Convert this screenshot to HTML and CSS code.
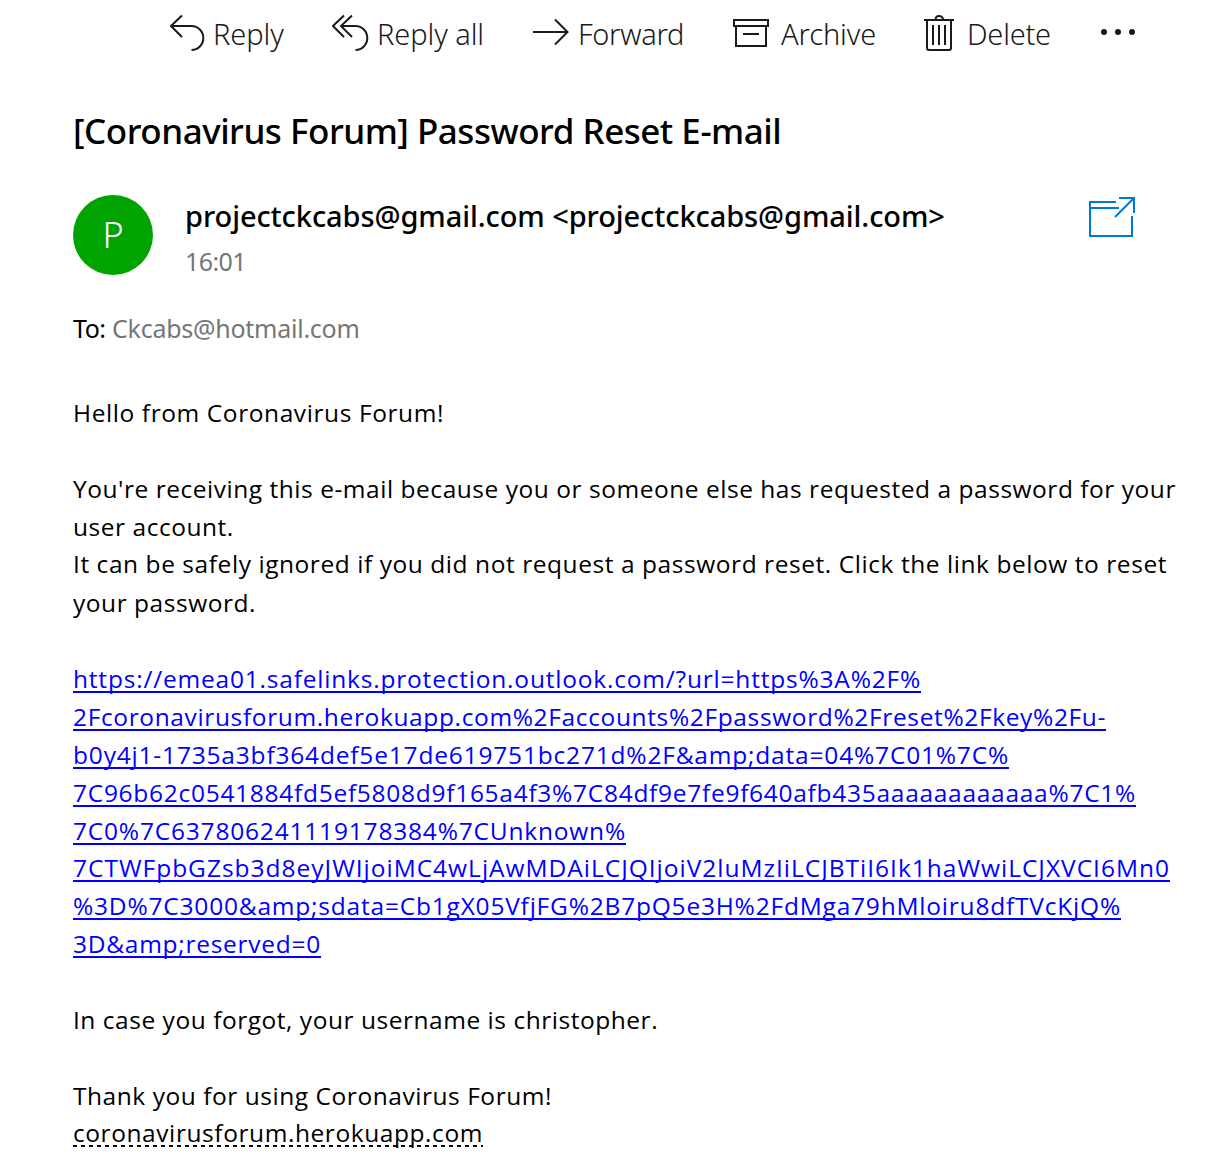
FILE: index.html
```html
<!DOCTYPE html>
<html lang="en">
<head>
<meta charset="utf-8">
<title>Password Reset E-mail</title>
<link rel="stylesheet" href="styles.css">
</head>
<body>
<nav class="toolbar">
  <a class="action reply"><svg width="43" height="54" viewBox="170 0 43 54"><path d="M182 15.500L171 26l11 11M171 26h20.500a11.800 12 0 0 1 0 24"/></svg><span>Reply</span></a>
  <a class="action reply-all"><svg width="45" height="54" viewBox="332 0 45 54"><path d="M344 15.500L333 26l11 11M352 15.500L341 26l11 11M341 26h14.500a11.800 12 0 0 1 0 24"/></svg><span>Reply all</span></a>
  <a class="action forward"><svg width="45" height="54" viewBox="533 0 45 54"><path d="M533 32h35M555 19.500L567.500 32L555 44.500"/></svg><span>Forward</span></a>
  <a class="action archive"><svg width="48" height="54" viewBox="733 0 48 54"><path d="M734 20h34v6h-34zM736 26v20h30V26M743 34h16"/></svg><span>Archive</span></a>
  <a class="action delete"><svg width="43" height="54" viewBox="924 0 43 54"><path d="M924 20h30M927 20v28q0 2 2 2h20q2 0 2-2V20M935.500 20q0-4 3.500-4t4.500 4M933 25v20M939 25v20M945 25v20"/></svg><span>Delete</span></a>
  <a class="action more"><svg width="36" height="54" viewBox="1101 0 36 54"><g class="dots"><circle cx="1104" cy="32" r="3"/><circle cx="1118" cy="32" r="3"/><circle cx="1132" cy="32" r="3"/></g></svg></a>
</nav>
<main class="message">
  <h1 class="subject">[Coronavirus Forum] Password Reset E-mail</h1>
  <header class="sender">
    <div class="avatar">P</div>
    <div class="sender-info">
      <div class="from">projectckcabs@gmail.com &lt;projectckcabs@gmail.com&gt;</div>
      <div class="time">16:01</div>
    </div>
    <svg class="open" width="48" height="42" viewBox="1088 196 48 42"><path d="M1116 202h-26v34h42v-20M1090 208h29M1119 198h15v15M1134 198l-19 19"/></svg>
  </header>
  <div class="to"><span class="to-label">To:</span> <span class="addr">Ckcabs@hotmail.com</span></div>
  <div class="content">
    <p><span class="line greeting">Hello from Coronavirus Forum!</span></p>
    <p>
      <span class="line intro">You're receiving this e-mail because you or someone else has requested a password for your</span>
      <span class="line intro">user account.</span>
      <span class="line ignore tight">It can be safely ignored if you did not request a password reset. Click the link below to reset</span>
      <span class="line intro loose">your password.</span>
    </p>
    <p><a class="link">
      <span class="line url-1">https://emea01.safelinks.protection.outlook.com/?url=https%3A%2F%</span>
      <span class="line url-2">2Fcoronavirusforum.herokuapp.com%2Faccounts%2Fpassword%2Freset%2Fkey%2Fu-</span>
      <span class="line url-3">b0y4j1-1735a3bf364def5e17de619751bc271d%2F&amp;amp;data=04%7C01%7C%</span>
      <span class="line url-4">7C96b62c0541884fd5ef5808d9f165a4f3%7C84df9e7fe9f640afb435aaaaaaaaaaaa%7C1%</span>
      <span class="line url-5">7C0%7C637806241119178384%7CUnknown%</span>
      <span class="line url-6 tight">7CTWFpbGZsb3d8eyJWIjoiMC4wLjAwMDAiLCJQIjoiV2luMzIiLCJBTiI6Ik1haWwiLCJXVCI6Mn0</span>
      <span class="line url-7">%3D%7C3000&amp;amp;sdata=Cb1gX05VfjFG%2B7pQ5e3H%2FdMga79hMloiru8dfTVcKjQ%</span>
      <span class="line url-8">3D&amp;amp;reserved=0</span>
    </a></p>
    <p><span class="line intro">In case you forgot, your username is christopher.</span></p>
    <p>
      <span class="line thanks">Thank you for using Coronavirus Forum!</span>
      <span class="line site tight">coronavirusforum.herokuapp.com</span>
    </p>
  </div>
</main>
</body>
</html>
```
FILE: styles.css
```css
* { box-sizing: border-box; }

body {
  margin: 0;
  background: #fff;
  color: #000;
  font-family: "Noto Sans", "Open Sans", sans-serif;
  white-space: nowrap;
}

h1, p { margin: 0; }

svg {
  display: block;
  flex: none;
  fill: none;
  stroke: #1a1a1a;
  stroke-width: 2;
}

.toolbar {
  display: grid;
  grid-template-columns: 162px 201px 200px 191px 177px auto;
  height: 70px;
  padding-left: 170px;
}

.action {
  display: flex;
  align-items: flex-start;
  color: #1a1a1a;
  font-size: 29px;
  font-weight: 300;
  line-height: 68px;
}

.reply, .reply-all { letter-spacing: -0.08px; }
.forward { letter-spacing: -0.33px; }
.archive { letter-spacing: -0.13px; }
.delete { letter-spacing: -0.25px; }

.dots { fill: #1a1a1a; stroke: none; }

.message { padding-left: 73px; }

.subject {
  height: 125px;
  padding-top: 36px;
  font-size: 35px;
  font-weight: 500;
  line-height: 50px;
  letter-spacing: -0.49px;
}

.sender { display: flex; height: 80px; }

.avatar {
  width: 80px;
  height: 80px;
  border-radius: 50%;
  background: #00a300;
  color: #fff;
  font-size: 36px;
  font-weight: 300;
  line-height: 80px;
  text-align: center;
}

.sender-info { width: 903px; padding-left: 32px; }

.from {
  font-size: 29px;
  font-weight: 500;
  line-height: 42px;
  letter-spacing: -0.085px;
}

.time {
  color: #767676;
  font-size: 25px;
  line-height: 48px;
  letter-spacing: -0.58px;
}

.open { margin: 1px 0 0 32px; stroke: #0078d7; }

.to { margin-top: 33px; font-size: 25px; line-height: 40px; }

.to-label { letter-spacing: -0.5px; }

.addr { color: #767676; letter-spacing: -0.25px; }

.content {
  margin-top: 46px;
  font-family: "Open Sans", "Noto Sans", sans-serif;
  font-size: 24.5px;
  line-height: 38px;
}

.content p { margin-bottom: 38px; }

.line { display: block; width: fit-content; }
.tight { margin-top: -1px; }
.loose { margin-top: 1px; }

.greeting { letter-spacing: 0.587px; }
.intro { letter-spacing: 0.53px; }
.ignore { letter-spacing: 0.558px; }
.thanks { letter-spacing: 0.543px; }

.link {
  color: #0000ff;
  text-decoration: underline;
  text-decoration-thickness: 2px;
  text-underline-offset: 3px;
  text-decoration-skip-ink: none;
}

.url-1 { letter-spacing: 0.799px; }
.url-2 { letter-spacing: 0.635px; }
.url-3 { letter-spacing: 0.814px; }
.url-4 { letter-spacing: 0.718px; }
.url-5 { letter-spacing: 0.806px; }
.url-6 { letter-spacing: 0.991px; }
.url-7 { letter-spacing: 0.797px; }
.url-8 { letter-spacing: 0.731px; }

.site {
  letter-spacing: 0.574px;
  background: repeating-linear-gradient(90deg, #000 0 4px, transparent 4px 8px) 0 31px / 100% 2px no-repeat;
}
```
